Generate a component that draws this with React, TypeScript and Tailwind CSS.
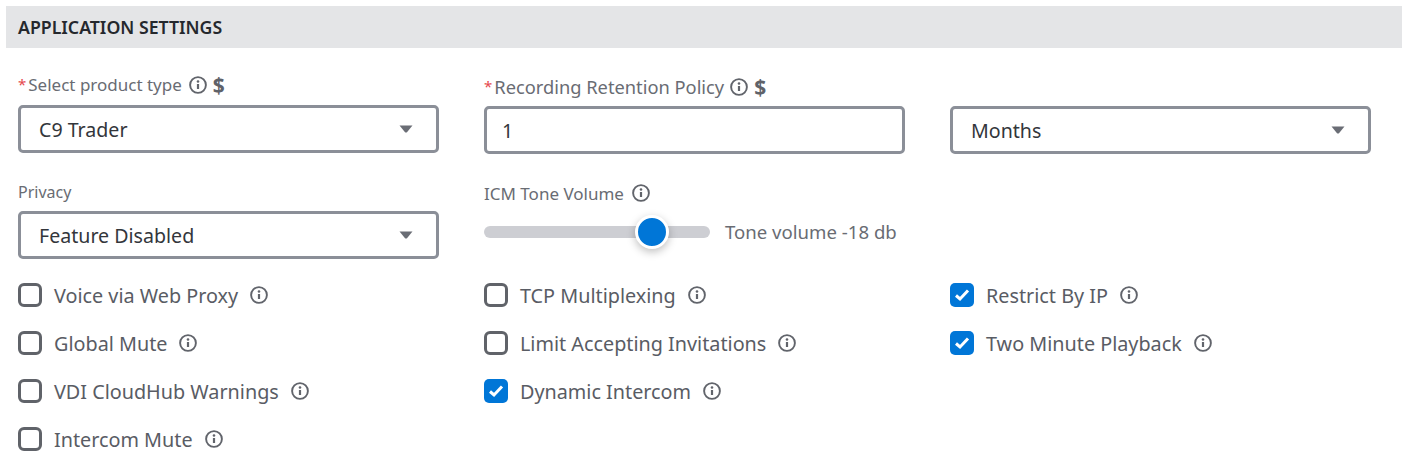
import React from "react";

function Info({ className = "" }: { className?: string }) {
  return (
    <svg width="18" height="18" viewBox="0 0 18 18" className={`shrink-0 ${className}`} fill="none">
      <circle cx="9" cy="9" r="7.9" stroke="#61646b" strokeWidth="1.9" />
      <circle cx="9" cy="5.5" r="1.3" fill="#61646b" />
      <path d="M9 8V13" stroke="#61646b" strokeWidth="2.2" />
    </svg>
  );
}

function Dollar() {
  return <span className="text-[21px] leading-none font-bold text-[#5f6269] ml-[6px]">$</span>;
}

function Star() {
  return <span className="text-[#e5484d] text-[15px] leading-none mr-[2px] relative top-[-1px]">*</span>;
}

function Select({ value }: { value: string }) {
  return (
    <div className="h-12 w-[421px] rounded-[5px] border-[3px] border-[#8b8f98] bg-white flex items-center justify-between pl-[18px] pr-[23px] text-[19.6px] text-[#33363b]">
      <span className="relative top-[1px]">{value}</span>
      <svg width="14" height="8" viewBox="0 0 14 8"><path d="M0.5 0.5H13.5L8 7.2Q7 8 6 7.2Z" fill="#6a6d75" /></svg>
    </div>
  );
}

function Check({ label, checked }: { label: string; checked?: boolean }) {
  return (
    <div className="h-12 flex items-center">
      {checked ? (
        <span className="w-6 h-6 rounded-[5px] bg-[#0076d7] flex items-center justify-center">
          <svg width="18" height="16" viewBox="0 0 18 16" fill="none">
            <path d="M3 8.5L7 12L15 3.5" stroke="#fff" strokeWidth="3" />
          </svg>
        </span>
      ) : (
        <span className="w-6 h-6 rounded-[6px] border-[3px] border-[#606369] bg-white" />
      )}
      <span className="ml-3 text-[19.8px] text-[#595c64] relative top-[1px]">{label}</span>
      <Info className="ml-3" />
    </div>
  );
}

export default function App() {
  return (
    <div className="w-[1402px] h-[472px] bg-white pt-[6px] pl-[6px] overflow-hidden font-['Noto_Sans','Open_Sans',sans-serif]">
      <div className="h-[42px] bg-[#e4e5e7] flex items-center pl-3 text-[17.7px] font-semibold text-[#25282d]">
        APPLICATION SETTINGS
      </div>
      <div className="pl-3 grid grid-cols-[466px_466px_auto]">
        <div className="pt-[26px]">
          <div className="h-[22px] flex items-center text-[17px] text-[#696c73]">
            <Star />Select product type<Info className="ml-[7px]" /><Dollar />
          </div>
          <div className="mt-[9px]"><Select value="C9 Trader" /></div>
        </div>
        <div className="pt-[28px]">
          <div className="h-[22px] flex items-center text-[18.3px] text-[#696c73]">
            <Star />Recording Retention Policy<Info className="ml-[6px]" /><Dollar />
          </div>
          <div className="mt-[8px] h-12 w-[421px] rounded-[5px] border-[3px] border-[#8b8f98] flex items-center pl-[15px] text-[19.6px] text-[#33363b]">
            <span className="relative top-[1px]">1</span>
          </div>
        </div>
        <div className="pt-[58px]">
          <Select value="Months" />
        </div>

        <div className="pt-[27px]">
          <div className="h-[22px] flex items-center text-[16px] text-[#696c73]">Privacy</div>
          <div className="mt-[8px]"><Select value="Feature Disabled" /></div>
        </div>
        <div className="pt-[29px]">
          <div className="h-[22px] flex items-center text-[17px] text-[#696c73]">
            ICM Tone Volume<Info className="ml-2 -translate-y-[1px]" />
          </div>
          <div className="mt-[7px] h-10 flex items-center">
            <div className="relative w-[226px] h-3 rounded-full bg-[#cdced3]">
              <span className="absolute left-[151px] top-[-11px] w-[34px] h-[34px] rounded-full bg-[#0076d7] border-[3px] border-white shadow-[0_3px_8px_rgba(0,0,0,0.25)]" />
            </div>
            <span className="ml-[15px] text-[18.6px] text-[#696c73]">Tone volume -18 db</span>
          </div>
        </div>
        <div />

        <div className="pt-3">
          <Check label="Voice via Web Proxy" />
          <Check label="Global Mute" />
          <Check label="VDI CloudHub Warnings" />
          <Check label="Intercom Mute" />
        </div>
        <div className="pt-3">
          <Check label="TCP Multiplexing" />
          <Check label="Limit Accepting Invitations" />
          <Check label="Dynamic Intercom" checked />
        </div>
        <div className="pt-3">
          <Check label="Restrict By IP" checked />
          <Check label="Two Minute Playback" checked />
        </div>
      </div>
    </div>
  );
}
